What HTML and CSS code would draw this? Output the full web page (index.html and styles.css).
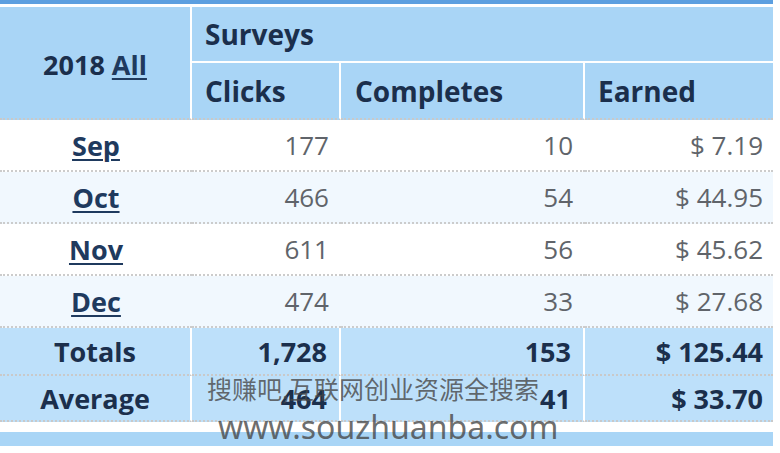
FILE: index.html
```html
<!DOCTYPE html>
<html lang="zh">
<head>
<meta charset="utf-8">
<link rel="stylesheet" href="styles.css">
</head>
<body>
<div class="page">
  <div class="topbar"></div>
  <table class="stats">
    <colgroup>
      <col class="c1"><col class="c2"><col class="c3"><col class="c4">
    </colgroup>
    <thead>
      <tr class="h1">
        <th rowspan="2" class="year">2018 <a href="#">All</a></th>
        <th colspan="3" class="group">Surveys</th>
      </tr>
      <tr class="h2">
        <th class="hc">Clicks</th>
        <th class="hc">Completes</th>
        <th class="hc last">Earned</th>
      </tr>
    </thead>
    <tbody>
      <tr class="odd"><td class="month"><a href="#">Sep</a></td><td class="num">177</td><td class="num">10</td><td class="num end">$ 7.19</td></tr>
      <tr class="even"><td class="month"><a href="#">Oct</a></td><td class="num">466</td><td class="num">54</td><td class="num end">$ 44.95</td></tr>
      <tr class="odd"><td class="month"><a href="#">Nov</a></td><td class="num">611</td><td class="num">56</td><td class="num end">$ 45.62</td></tr>
      <tr class="even"><td class="month"><a href="#">Dec</a></td><td class="num">474</td><td class="num">33</td><td class="num end">$ 27.68</td></tr>
    </tbody>
    <tfoot>
      <tr class="tot"><th class="flabel">Totals</th><td class="fnum">1,728</td><td class="fnum">153</td><td class="fnum end">$ 125.44</td></tr>
      <tr class="avg"><th class="flabel">Average</th><td class="fnum">464</td><td class="fnum">41</td><td class="fnum end">$ 33.70</td></tr>
    </tfoot>
  </table>
  <div class="bottombar"></div>
  <div class="watermark">
    <div class="wm-cn">搜赚吧,互联网创业资源全搜索</div>
    <div class="wm-url">www.souzhuanba.com</div>
  </div>
</div>
</body>
</html>
```

FILE: styles.css
```css
html, body {
  margin: 0;
  padding: 0;
  background: #ffffff;
}

.page {
  position: relative;
  width: 780px;
  height: 453px;
  overflow: hidden;
  font-family: "Open Sans", "Noto Sans", sans-serif;
}

.topbar {
  width: 773px;
  height: 4px;
  background: #5c9fe0;
  margin-bottom: 3px;
}

.stats {
  width: 773px;
  table-layout: fixed;
  border-collapse: separate;
  border-spacing: 0;
}

.c1 { width: 192px; }
.c2 { width: 149px; }
.c3 { width: 244px; }
.c4 { width: 188px; }

.stats th, .stats td {
  box-sizing: border-box;
  padding: 0;
}

/* header */
.stats .year,
.stats .group,
.stats .hc {
  background: #a9d5f6;
  color: #1b2f4c;
  font-weight: 700;
  font-size: 28px;
  text-align: left;
  padding-left: 13px;
  border-right: 2px solid #ffffff;
  border-bottom: 2px solid #ffffff;
}

.stats .group { height: 56px; border-right: none; }
.stats .hc {
  height: 57px;
  border-bottom: 2px dotted #c9c9c9;
}
.stats .hc.last { border-right: none; }
.stats .hc:first-child { padding-left: 13px; }
.stats .hc:nth-child(2) { padding-left: 14px; }

.stats .year {
  text-align: center;
  padding-left: 0;
  padding-top: 4px;
  font-size: 27px;
  border-bottom: 2px dotted #c9c9c9;
}

.year a, .month a {
  color: #1f3a5e;
  text-decoration: underline;
  text-decoration-thickness: 2px;
  text-underline-offset: 3px;
}

/* body */
.stats .num,
.stats .month {
  height: 52px;
  border-bottom: 2px dotted #cccccc;
  font-size: 26px;
}

.stats .num {
  color: #60646a;
  text-align: right;
  padding-right: 12px;
}
.stats .num.end { padding-right: 10px; }

.stats .month {
  text-align: center;
  font-weight: 700;
  font-size: 27px;
}

.even .num, .even .month { background: #f1f8fe; }
.odd .num, .odd .month { background: #ffffff; }

/* footer */
.stats .flabel,
.stats .fnum {
  background: #bde0fa;
  color: #1b2f4c;
  font-weight: 700;
  font-size: 27px;
  border-right: 2px solid #ffffff;
  border-bottom: 2px dotted #c9c9c9;
}
.stats .fnum { text-align: right; padding-right: 12px; }
.stats .fnum.end { border-right: none; padding-right: 10px; }
.stats .flabel { text-align: center; }
.tot .flabel, .tot .fnum { height: 48px; }
.avg .flabel, .avg .fnum { height: 46px; }

.bottombar {
  width: 773px;
  height: 14px;
  margin-top: 10px;
  background: #a9d5f6;
}

.watermark {
  position: absolute;
  left: 207px;
  top: 369px;
  color: rgba(70, 70, 70, 0.78);
  font-family: "Noto Sans CJK SC", "Noto Sans", sans-serif;
  pointer-events: none;
}
.wm-cn {
  font-size: 25px;
  line-height: 38px;
}
.wm-url {
  font-family: "Noto Sans", "Open Sans", sans-serif;
  font-size: 32px;
  line-height: 40px;
  margin-left: 11px;
}
```
